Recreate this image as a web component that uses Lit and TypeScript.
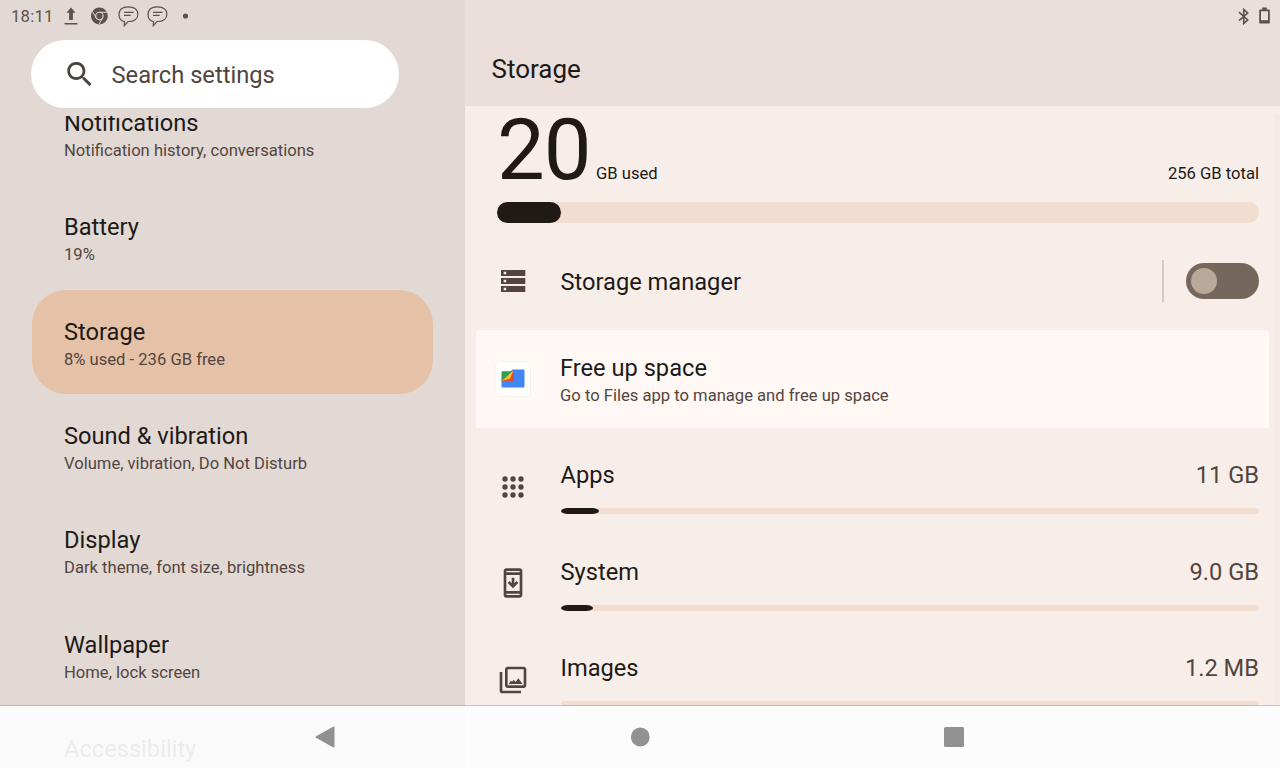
import { LitElement, html, css, svg } from "lit";
import { customElement } from "lit/decorators.js";

const SETTINGS = [
  { title: "Notifications", sub: "Notification history, conversations" },
  { title: "Battery", sub: "19%" },
  { title: "Storage", sub: "8% used - 236 GB free", active: true },
  { title: "Sound & vibration", sub: "Volume, vibration, Do Not Disturb" },
  { title: "Display", sub: "Dark theme, font size, brightness" },
  { title: "Wallpaper", sub: "Home, lock screen" },
  { title: "Accessibility", sub: "" },
];

const appsIcon = svg`
  <circle cx="6" cy="6" r="2"/><circle cx="12" cy="6" r="2"/><circle cx="18" cy="6" r="2"/>
  <circle cx="6" cy="12" r="2"/><circle cx="12" cy="12" r="2"/><circle cx="18" cy="12" r="2"/>
  <circle cx="6" cy="18" r="2"/><circle cx="12" cy="18" r="2"/><circle cx="18" cy="18" r="2"/>`;

const systemIcon = svg`
  <path fill-rule="evenodd" d="M17 1H7C5.9 1 5 1.9 5 3v18c0 1.1.9 2 2 2h10c1.100 0 2-.9 2-2V3c0-1.100-.9-2-2-2zm0 20H7v-1h10v1zm0-3H7V6h10v12zM7 4V3h10v1H7z"/>
  <path d="M16 12l-1.410-1.410L13 12.170V8h-2v4.170l-1.590-1.580L8 12l4 4 4-4z"/>`;

const imagesIcon = svg`
  <path fill-rule="evenodd" d="M20 4v12H8V4h12m0-2H8c-1.100 0-2 .9-2 2v12c0 1.100.9 2 2 2h12c1.100 0 2-.9 2-2V4c0-1.100-.9-2-2-2z"/>
  <path d="M12.500 11.900l-1.250 1.500-.9-1L8.900 15h10.300l-3.200-4.300-2.100 2.800zM2 6v14c0 1.100.9 2 2 2h14v-2H4V6H2z"/>`;

const USAGE = [
  { name: "Apps", size: "11 GB", pct: 5.5, icon: appsIcon },
  { name: "System", size: "9.0 GB", pct: 4.6, icon: systemIcon },
  { name: "Images", size: "1.2 MB", pct: 0, icon: imagesIcon },
];

const chatIcon = () => html`<svg class="chat" width="21" height="21" viewBox="0 0 21 21" fill="none" stroke="#5b524d">
  <path stroke-width="1.200" d="M5.200 15.200C2.400 14.100 1 11.800 1 8.400 1 3.400 4.300.8 10.300.8s9.600 2.700 9.600 7.200-3.500 7.500-9.200 7.500H10L6.300 19.700l.2-4z"/>
  <path stroke-width="1.300" d="M6 6.400h9.600M6 9.300h6.600"/>
</svg>`;

@customElement("app-root")
export class AppRoot extends LitElement {
  static styles = css`
    :host {
      display: block;
      position: relative;
      width: 1280px;
      height: 768px;
      overflow: hidden;
      font-family: Roboto, sans-serif;
      color: #201a17;
    }
    * { box-sizing: border-box; }
    svg { display: block; flex: none; }
    .screen { display: grid; grid-template-columns: 465px 815px; height: 768px; }
    .side { display: flex; flex-direction: column; background: #e3d9d4; min-height: 0; }
    .detail { display: flex; flex-direction: column; background: #f8eee9; min-height: 0; min-width: 0; }
    .status { display: flex; align-items: center; height: 32px; flex: none; color: #5b524d; }
    .left-status { padding-left: 11px; }
    .time { font-size: 16.700px; line-height: 20px; width: 52px; letter-spacing: 0.200px; padding-top: 2px; }
    .upload { margin-right: 12px; }
    .chrome { margin-right: 10px; }
    .chat { margin-right: 8px; }
    .search {
      display: flex; align-items: center; flex: none;
      width: 368.200px; height: 68px; margin: 8px 0 0 31px; padding-left: 36px;
      border-radius: 34px; background: #fff; color: #504540; font-size: 23.700px;
    }
    .search-text { margin-left: 19.500px; padding-top: 2px; }
    .list { margin-top: 7.500px; flex: 1; overflow: hidden; min-height: 0; }
    .items { margin-top: -33.900px; }
    .item { width: 401px; height: 104px; margin: 0 0 0.350px 32px; padding: 27.500px 0 0 32px; border-radius: 34px; }
    .active { background: #e5c1a8; }
    .title { font-size: 23.650px; line-height: 29px; white-space: nowrap; }
    .sub { font-size: 16.600px; line-height: 25px; color: #52453f; white-space: nowrap; }
    .header { height: 106px; flex: none; background: #eadfdb; }
    .right-status { justify-content: flex-end; padding-right: 10px; gap: 9px; }
    .header-title { padding: 21px 0 0 26.500px; font-size: 26px; line-height: 32px; }
    .body { flex: 1; min-height: 0; overflow: hidden; padding-right: 11px; }
    .summary { height: 96px; padding: 0 10px 0 32px; display: flex; align-items: baseline; font-size: 16.600px; }
    .amount { font-size: 85px; line-height: 100px; margin-top: -6px; letter-spacing: -1px; width: 99px; }
    .total { margin-left: auto; }
    .bar { margin: 0 10px 0 32px; height: 21px; border-radius: 11px; background: #f2ded1; }
    .bar-fill { height: 21px; width: 64px; border-radius: 11px; background: #201a17; }
    .manager { display: flex; align-items: center; height: 107px; padding: 8px 10px 0 32px; }
    .icon { fill: #52453f; width: 32px; height: 32px; }
    .manager-title { margin-left: 31.500px; flex: 1; padding-top: 4px; }
    .divider { width: 2px; height: 42px; background: #d6cac4; margin-right: 22px; }
    .toggle { width: 73px; height: 36px; border-radius: 18px; background: #76675c; padding: 5px; }
    .knob { width: 26px; height: 26px; border-radius: 50%; background: #baa89b; }
    .card { display: flex; align-items: center; height: 98px; margin-left: 11px; padding-left: 19px; border-radius: 3px; background: #fff8f5; }
    .files { width: 36px; height: 36px; background: #fff; border: 1px solid #f7f0ec; border-radius: 4px; display: grid; place-items: center; }
    .card-text { margin-left: 29px; padding-top: 3px; }
    .usage { display: flex; height: 96.500px; padding: 33px 10px 0 32px; }
    .usage-icon { padding-top: 9.500px; }
    .usage-main { flex: 1; margin-left: 31.500px; }
    .usage-head { display: flex; justify-content: space-between; }
    .size { color: #52453f; }
    .thin { height: 6px; margin-top: 18px; border-radius: 3px; background: #f2ded1; overflow: hidden; }
    .thin-fill { height: 6px; border-radius: 7px / 3px; background: #201a17; }
    .scroll { position: absolute; right: 0; top: 114px; width: 5px; height: 591px; background: #f4e9e4; }
    .nav {
      position: absolute; left: 0; right: 0; bottom: 0; height: 63px;
      background: rgba(253, 253, 254, 0.920); background-clip: padding-box;
      border-top: 1px solid rgba(120, 75, 50, 0.280);
      display: grid; grid-template-columns: repeat(3, 314.700px); justify-content: center; place-items: center;
      padding: 0 1px 1px 0;
    }
  `;

  render() {
    return html`
      <div class="screen">
        <div class="side">
          <div class="status left-status">
            <span class="time">18:11</span>
            <svg class="upload" width="15" height="18" viewBox="0 0 15 18" fill="#5b524d">
              <path d="M8 .5l4.500 5.200H9.900V13H6.100V5.700H3.500zM1.500 16h13v1.600h-13z"/>
            </svg>
            <svg class="chrome" width="18" height="18" viewBox="0 0 18 18">
              <circle cx="9.400" cy="9" r="8.400" fill="#5b524d"/>
              <circle cx="9.400" cy="9" r="3.700" fill="none" stroke="#e3d9d4" stroke-width="1.100"/>
              <path d="M9.400 5.300h7.500M6.200 10.900L2.400 4.400M12.600 10.900L9 17.300" stroke="#e3d9d4" stroke-width="1"/>
            </svg>
            ${chatIcon()}${chatIcon()}
            <svg width="18" height="18" viewBox="0 0 18 18"><circle cx="9.500" cy="9" r="2.600" fill="#5b524d"/></svg>
          </div>
          <div class="search">
            <svg width="25" height="25" viewBox="2.800 3.100 18 18" fill="#4a433e">
              <path d="M15.500 14h-.790l-.280-.270C15.410 12.590 16 11.110 16 9.500 16 5.910 13.090 3 9.500 3S3 5.910 3 9.500 5.910 16 9.500 16c1.610 0 3.090-.590 4.230-1.570l.270.280v.790l5 4.990L20.490 19l-4.990-5zm-6 0C7.010 14 5 11.990 5 9.500S7.010 5 9.500 5 14 7.010 14 9.500 11.990 14 9.500 14z"/>
            </svg>
            <span class="search-text">Search settings</span>
          </div>
          <div class="list">
            <div class="items">
              ${SETTINGS.map((s) => html`
                <div class="item ${s.active ? "active" : ""}">
                  <div class="title">${s.title}</div>
                  <div class="sub">${s.sub}</div>
                </div>`)}
            </div>
          </div>
        </div>
        <div class="detail">
          <div class="header">
            <div class="status right-status">
              <svg width="12" height="17" viewBox="0 0 12 17" fill="none" stroke="#5b524d" stroke-width="1.600">
                <path d="M1 4.200l8.700 7.700-4 3.600v-14l4 3.600L1 12.700"/>
              </svg>
              <svg width="11" height="18" viewBox="0 0 11 18" fill="#5b524d">
                <path fill-rule="evenodd" d="M3.200.6h4.600v1.800H10c.5 0 .8.300.8.800v12.600c0 .5-.3.800-.8.800H1c-.5 0-.8-.3-.8-.8V3.200c0-.5.3-.8.800-.8h2.200zM2 4.200v9h7v-9z"/>
              </svg>
            </div>
            <div class="header-title">Storage</div>
          </div>
          <div class="body">
            <div class="summary">
              <span class="amount">20</span><span>GB used</span><span class="total">256 GB total</span>
            </div>
            <div class="bar"><div class="bar-fill"></div></div>
            <div class="manager">
              <svg class="icon" viewBox="0 0 32 32">
                <path fill-rule="evenodd" d="M4 5h24.300v5.900H4zM6.700 6.700v2.500h2.500V6.700zM4 13h24.300v5.900H4zM6.700 14.700v2.500h2.500v-2.500zM4 21h24.300v5.900H4zM6.700 22.700v2.500h2.500v-2.500z"/>
              </svg>
              <div class="title manager-title">Storage manager</div>
              <div class="divider"></div>
              <div class="toggle"><div class="knob"></div></div>
            </div>
            <div class="card">
              <div class="files">
                <svg width="24" height="20" viewBox="0 0 24 20">
                  <path d="M11.500.6H22c1 0 1.500.5 1.500 1.500v15c0 1-.5 1.500-1.500 1.500H2c-1 0-1.500-.5-1.500-1.500V11z" fill="#4285f4"/>
                  <path d="M12.700.8v10c0 .8-.5 1.300-1.300 1.300H.6z" fill="#d94b32"/>
                  <path d="M12.600.9L9.200 9.600.6 12z" fill="#fbbc1d"/>
                  <path d="M2 2.300h9.300L.5 11.900V3.800c0-1 .5-1.500 1.500-1.500z" fill="#2d9e50"/>
                </svg>
              </div>
              <div class="card-text">
                <div class="title">Free up space</div>
                <div class="sub">Go to Files app to manage and free up space</div>
              </div>
            </div>
            ${USAGE.map((u) => html`
              <div class="usage">
                <div class="usage-icon"><svg class="icon" viewBox="0 0 24 24">${u.icon}</svg></div>
                <div class="usage-main">
                  <div class="usage-head title"><span>${u.name}</span><span class="size">${u.size}</span></div>
                  <div class="thin"><div class="thin-fill" style="width:${u.pct}%"></div></div>
                </div>
              </div>`)}
          </div>
        </div>
      </div>
      <div class="scroll"></div>
      <div class="nav">
        <svg width="22" height="24" viewBox="0 0 22 24"><path d="M2.500 12L19.500 2.500v19z" fill="#919191" stroke="#919191" stroke-width="2" stroke-linejoin="round"/></svg>
        <svg width="20" height="20" viewBox="0 0 20 20"><circle cx="10.300" cy="10" r="9.400" fill="#919191"/></svg>
        <svg width="20" height="20" viewBox="0 0 20 20"><rect width="20" height="20" rx="1.500" fill="#919191"/></svg>
      </div>`;
  }
}
